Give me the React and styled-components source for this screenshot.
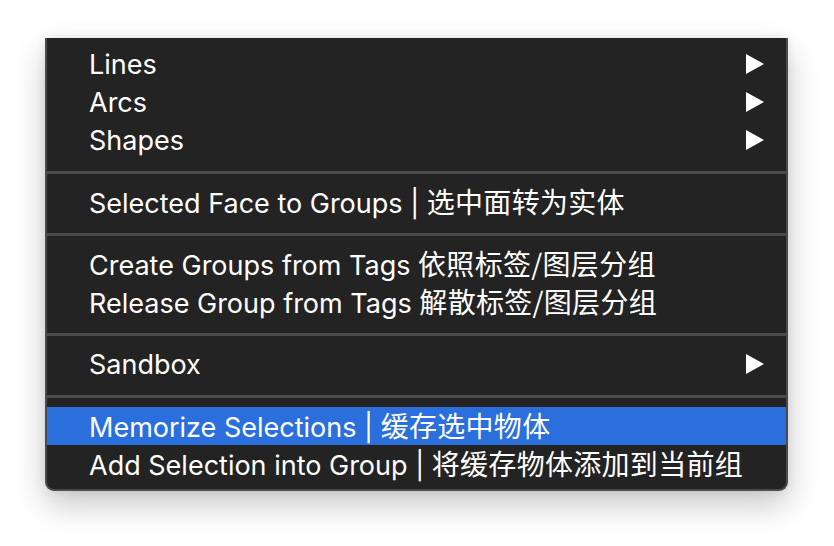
import React from 'react';
import styled, { createGlobalStyle } from 'styled-components';

const GlobalStyle = createGlobalStyle`
  html, body {
    margin: 0;
    padding: 0;
    background: #ffffff;
  }
`;

const Page = styled.div`
  width: 834px;
  height: 546px;
  padding: 38px 0 0 45px;
  box-sizing: border-box;
  overflow: hidden;
`;

const Menu = styled.div`
  width: 743px;
  box-sizing: border-box;
  background: #232323;
  border: 2px solid #4b4b4b;
  border-top: none;
  border-radius: 0 0 9px 9px;
  padding: 7px 0 6px;
  box-shadow: 0 14px 32px rgba(0, 0, 0, 0.22), 0 0 10px rgba(0, 0, 0, 0.08);
  font-family: Inter, "Noto Sans CJK SC", sans-serif;
  font-size: 27px;
  color: #ffffff;
`;

const Item = styled.div`
  display: flex;
  align-items: center;
  justify-content: space-between;
  height: 38px;
  padding: 0 22px 0 42px;
  background: ${(p) => (p.active ? '#2a6fdb' : 'transparent')};
  white-space: nowrap;
`;

const Label = styled.span`
  line-height: 1;
`;

const Chinese = styled.span`
  font-family: "Noto Sans CJK SC", sans-serif;
  font-size: 28px;
  letter-spacing: 0.3px;
`;

const Separator = styled.div`
  height: 3px;
  margin: 12px 0 9px;
  background: #4a4a4a;
`;

const Arrow = () => (
  <svg width="18" height="20" viewBox="0 0 18 20">
    <polygon points="0,0 18,10 0,20" fill="#ffffff" />
  </svg>
);

const groups = [
  [
    { en: 'Lines', sub: true },
    { en: 'Arcs', sub: true },
    { en: 'Shapes', sub: true },
  ],
  [{ en: 'Selected Face to Groups | ', zh: '选中面转为实体' }],
  [
    { en: 'Create Groups from Tags ', zh: '依照标签/图层分组' },
    { en: 'Release Group from Tags ', zh: '解散标签/图层分组' },
  ],
  [{ en: 'Sandbox', sub: true }],
  [
    { en: 'Memorize Selections | ', zh: '缓存选中物体', active: true },
    { en: 'Add Selection into Group | ', zh: '将缓存物体添加到当前组' },
  ],
];

export default function App() {
  return (
    <>
      <GlobalStyle />
      <Page>
        <Menu>
          {groups.map((group, gi) => (
            <React.Fragment key={gi}>
              {gi > 0 && <Separator />}
              {group.map((item) => (
                <Item key={item.en} active={item.active}>
                  <Label>
                    {item.en}
                    {item.zh && <Chinese>{item.zh}</Chinese>}
                  </Label>
                  {item.sub && <Arrow />}
                </Item>
              ))}
            </React.Fragment>
          ))}
        </Menu>
      </Page>
    </>
  );
}
